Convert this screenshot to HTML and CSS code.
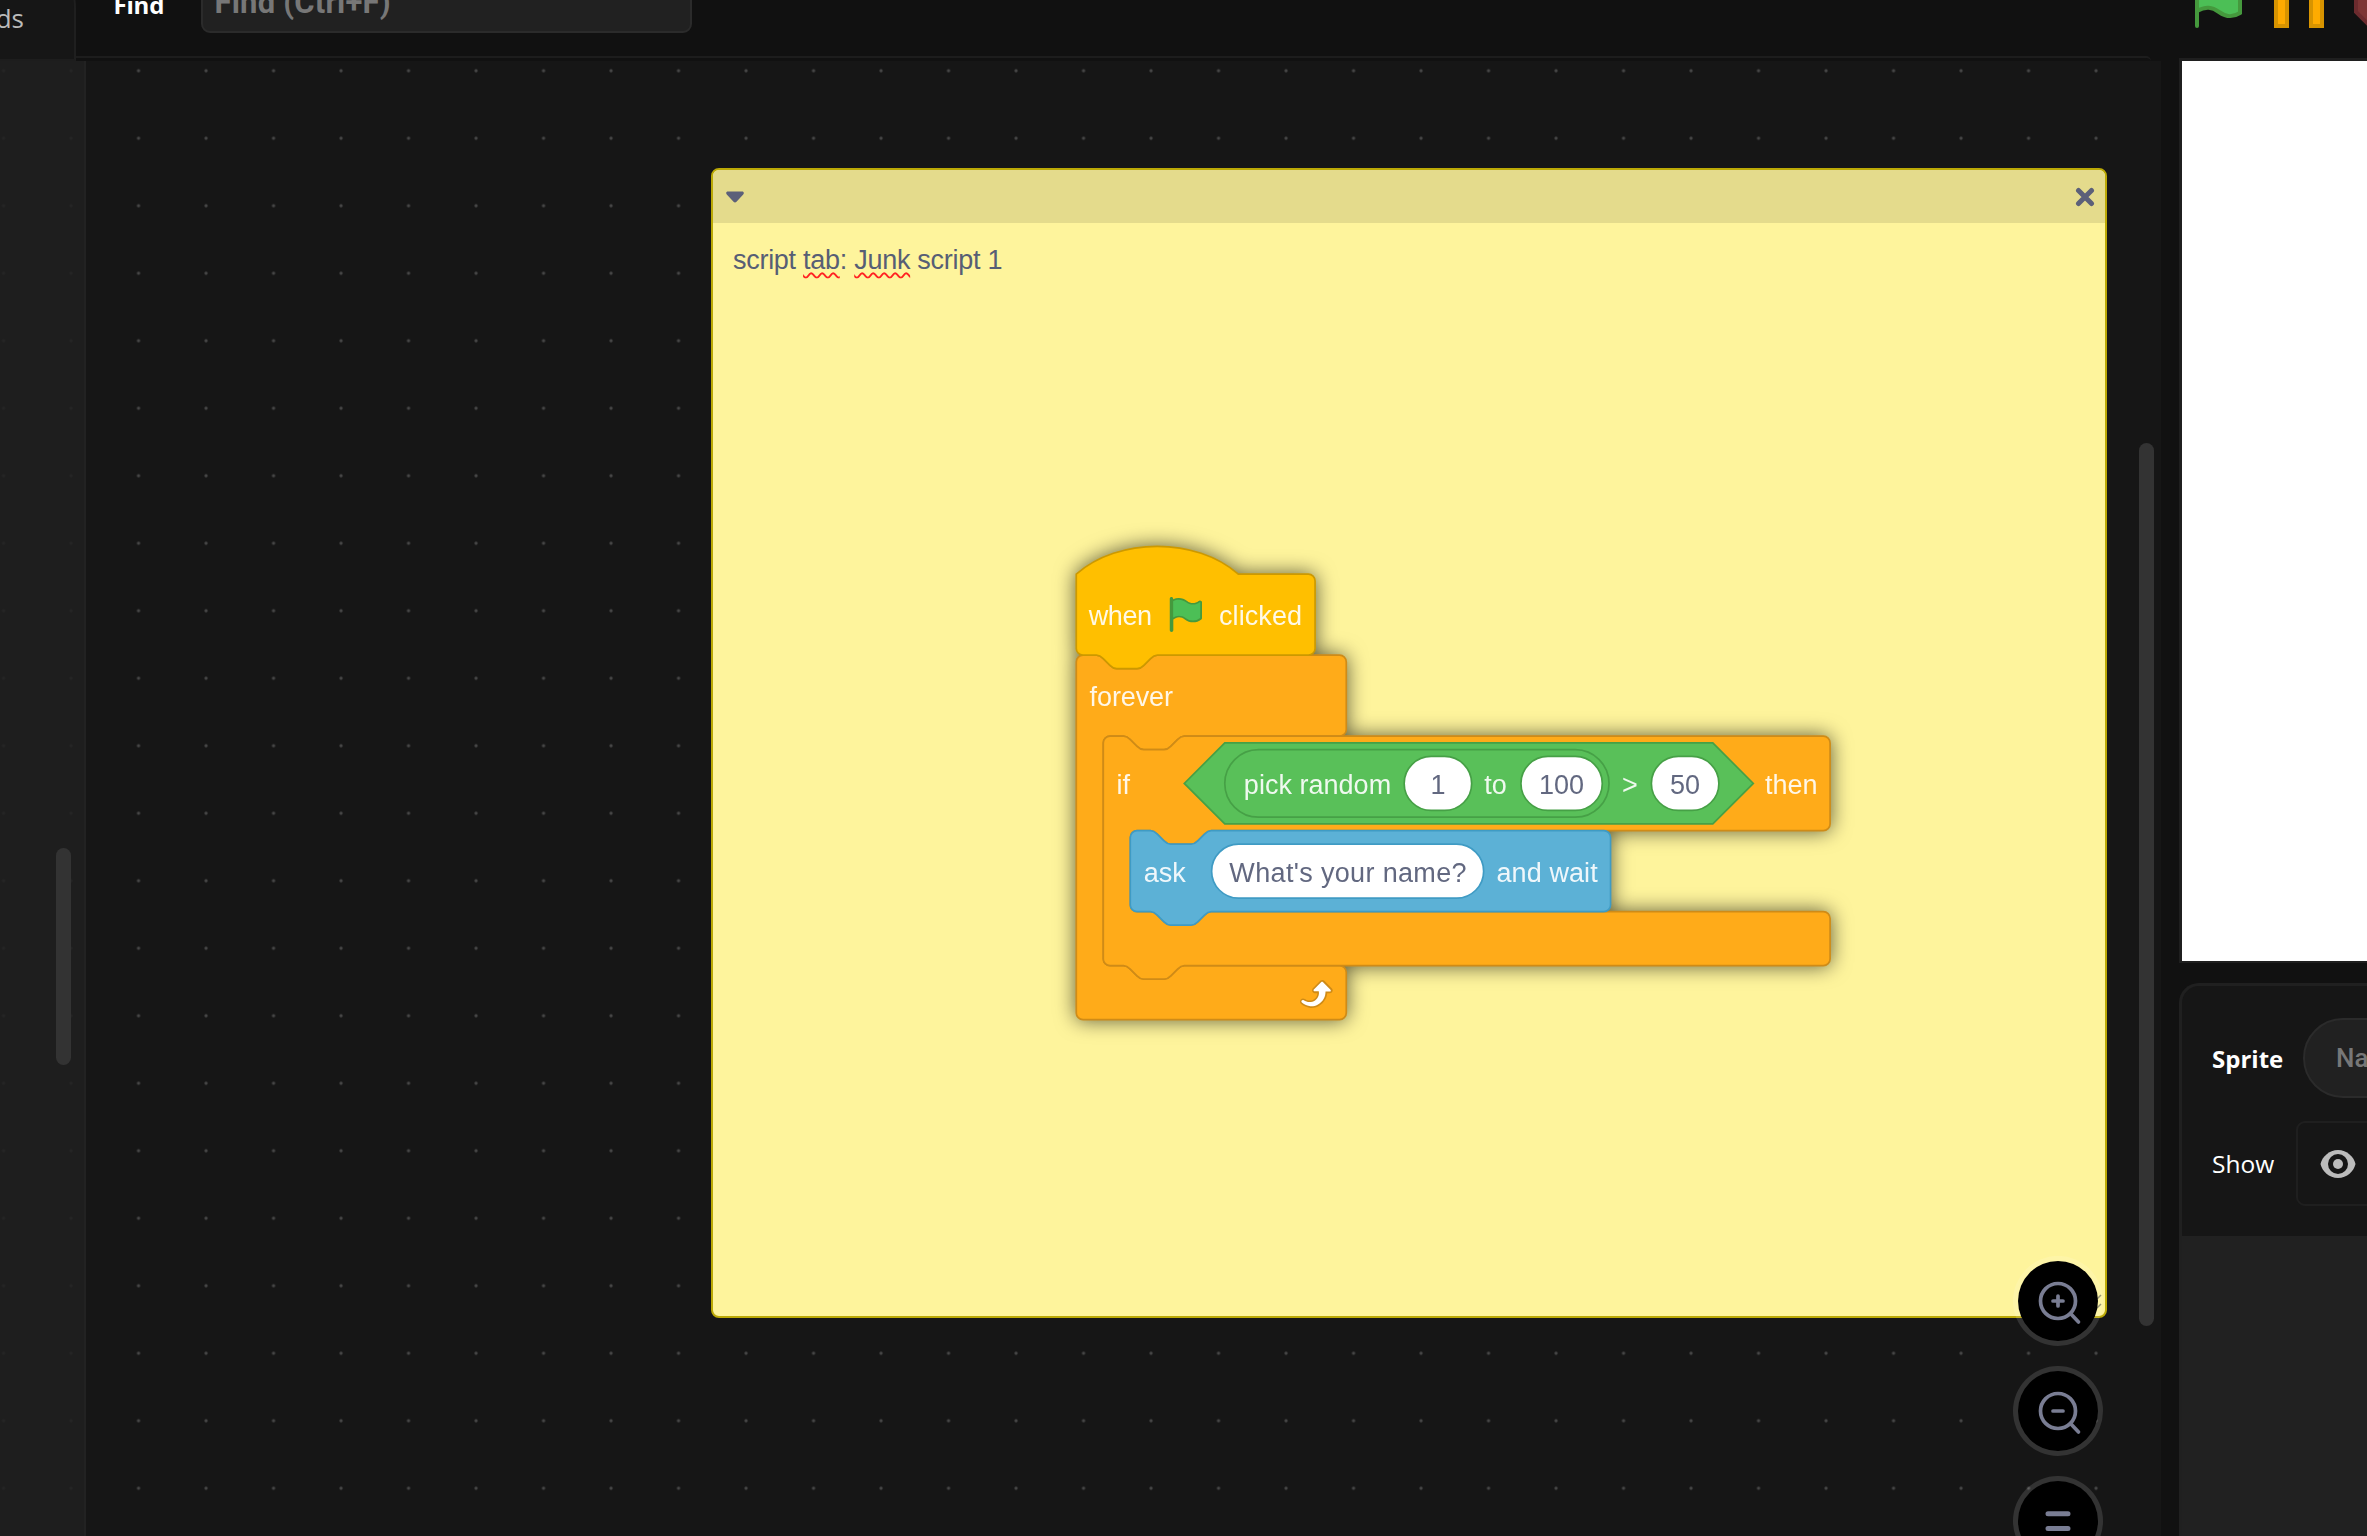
FILE: index.html
```html
<!DOCTYPE html>
<html lang="en">
<head>
<meta charset="utf-8">
<title>Script editor</title>
<link rel="stylesheet" href="styles.css">
</head>
<body>
<div class="app">
  <main class="editor">
    <header class="topbar">
      <div class="tab">Sounds</div>
      <label class="find-label" for="find">Find</label>
      <div class="find-box" id="find"><span>Find (Ctrl+F)</span></div>
    </header>
    <section class="workspace">
      <aside class="flyout"><div class="thumb flyout-thumb"></div></aside>
      <article class="comment">
        <div class="comment-bar">
          <svg width="18" height="12" viewBox="0 0 18 12"><path d="M2 .5h14c2 0 2.300 1.800 1.200 3L10.500 10.700c-1 1-2 1-3 0L.8 3.500C-.3 2.300 0 .5 2 .5z" fill="#5c6079"/></svg>
          <svg width="20" height="20" viewBox="0 0 20 20"><path d="M3.500 3.500l13 13M16.500 3.500l-13 13" stroke="#5c6079" stroke-width="5" stroke-linecap="round"/></svg>
        </div>
        <p class="comment-text">script <u>tab</u>: <u>Junk</u> script 1</p>
      </article>
      <svg class="grip" width="12" height="16" viewBox="0 0 12 16"><path d="M6 5L10 1M6 14l4-4" stroke="#8b8762" stroke-width="1.500"/></svg>

      <svg class="blocks" width="780" height="520" viewBox="0 0 462.222 308.148">
        <g class="stack" transform="translate(21.500 32.100)">
          <path class="control" d="M0 52a4 4 0 0 1 4-4h8c2 0 3 1 4 2l4 4c1 1 2 2 4 2h12c2 0 3-1 4-2l4-4c1-1 2-2 4-2H156a4 4 0 0 1 4 4v40a4 4 0 0 1-4 4H64c-2 0-3 1-4 2l-4 4c-1 1-2 2-4 2H40c-2 0-3-1-4-2l-4-4c-1-1-2-2-4-2h-8a4 4 0 0 0-4 4V228a4 4 0 0 0 4 4h8c2 0 3 1 4 2l4 4c1 1 2 2 4 2h12c2 0 3-1 4-2l4-4c1-1 2-2 4-2H156a4 4 0 0 1 4 4v24a4 4 0 0 1-4 4H4a4 4 0 0 1-4-4z"/>
          <path class="event" d="M0 0c25-22 71-22 96 0H137.500a4 4 0 0 1 4 4v40a4 4 0 0 1-4 4H48c-2 0-3 1-4 2l-4 4c-1 1-2 2-4 2H24c-2 0-3-1-4-2l-4-4c-1-1-2-2-4-2H4a4 4 0 0 1-4-4z"/>
          <path class="control" d="M16 100a4 4 0 0 1 4-4h8c2 0 3 1 4 2l4 4c1 1 2 2 4 2h12c2 0 3-1 4-2l4-4c1-1 2-2 4-2H442.700a4 4 0 0 1 4 4v48a4 4 0 0 1-4 4H80c-2 0-3 1-4 2l-4 4c-1 1-2 2-4 2H56c-2 0-3-1-4-2l-4-4c-1-1-2-2-4-2h-8a4 4 0 0 0-4 4v40a4 4 0 0 0 4 4h8c2 0 3 1 4 2l4 4c1 1 2 2 4 2h12c2 0 3-1 4-2l4-4c1-1 2-2 4-2H442.700a4 4 0 0 1 4 4v24a4 4 0 0 1-4 4H64c-2 0-3 1-4 2l-4 4c-1 1-2 2-4 2H40c-2 0-3-1-4-2l-4-4c-1-1-2-2-4-2h-8a4 4 0 0 1-4-4z"/>
          <path class="sensing" d="M32 156a4 4 0 0 1 4-4h8c2 0 3 1 4 2l4 4c1 1 2 2 4 2h12c2 0 3-1 4-2l4-4c1-1 2-2 4-2H312.600a4 4 0 0 1 4 4v40a4 4 0 0 1-4 4H80c-2 0-3 1-4 2l-4 4c-1 1-2 2-4 2H56c-2 0-3-1-4-2l-4-4c-1-1-2-2-4-2h-8a4 4 0 0 1-4-4z"/>
          <path class="operator" d="M88 100H377.200l24 24-24 24H88l-24-24z"/>
          <rect class="operator" x="88" y="104" width="227.700" height="40" rx="20"/>
          <rect class="field op-field" x="194.300" y="108" width="40" height="32" rx="16"/>
          <rect class="field op-field" x="263.500" y="108" width="48.200" height="32" rx="16"/>
          <rect class="field op-field" x="340.800" y="108" width="40" height="32" rx="16"/>
          <rect class="field sense-field" x="80.200" y="160" width="161.200" height="32" rx="16"/>
          <g transform="translate(52.900 12)">
            <path fill="#45993d" d="M20.800 3.700c-.4-.2-.9-.1-1.200.2-2 1.600-4.800 1.600-6.800 0-2.300-1.900-5.600-2.300-8.300-1v-.4c0-.6-.5-1-1-1s-1 .4-1 1v18.800c0 .5.5 1 1 1h.1c.5 0 1-.5 1-1v-6.400c1-.7 2.100-1.200 3.400-1.300 1.200 0 2.400.4 3.400 1.200 2.900 2.300 7 2.300 9.800 0 .3-.2.4-.5.4-.9V4.700c0-.5-.3-.9-.8-1z"/>
            <path fill="#4cbf56" d="M20.600 4.800l-.1 9.100v.1c-2.500 2-6.100 2-8.600 0-1.100-.9-2.500-1.400-4-1.400-1.200.1-2.300.5-3.400 1.100V4c2.500-1.400 5.500-1.100 7.700.6 2.400 1.900 5.700 1.900 8.100 0h.2c0 .1.100.1.100.2z"/>
          </g>
          <g transform="translate(128.500 236.300)">
            <path fill="#cf8b17" d="M23.300 11c-.3.6-.9 1-1.500 1h-1.600c-.1 1.300-.5 2.500-1.100 3.600-.9 1.700-2.300 3.200-4.100 4.100-1.700.9-3.600 1.200-5.500.9-1.800-.3-3.500-1.100-4.900-2.300-.7-.7-.7-1.900 0-2.600.6-.6 1.600-.7 2.300-.2H7c.9.6 1.900.9 2.900.9s1.900-.3 2.700-.9c1.100-.8 1.800-2.100 1.800-3.500h-1.500c-.9 0-1.700-.7-1.700-1.700 0-.4.200-.9.500-1.200l4.400-4.400c.7-.6 1.700-.6 2.400 0L23 9.200c.5.5.6 1.200.3 1.800z"/>
            <path fill="#fff" d="M21.800 11h-2.600c0 1.500-.3 2.900-1 4.200-.8 1.600-2.100 2.800-3.700 3.600-1.500.8-3.300 1.100-4.900.8-1.600-.2-3.200-1-4.400-2.100-.4-.3-.4-.9-.1-1.200.3-.4.9-.4 1.200-.1 1 .7 2.200 1.100 3.400 1.100s2.300-.3 3.300-1c.9-.6 1.600-1.500 2-2.600.3-.9.4-1.800.2-2.800h-2.400c-.4 0-.7-.3-.7-.7 0-.2.1-.3.2-.4l4.400-4.400c.3-.3.7-.3.9 0L22 9.800c.3.3.4.6.3.9s-.3.300-.5.3z"/>
          </g>
          <g class="labels">
            <text x="7.400" y="30" textLength="37.500">when</text>
            <text x="84.600" y="30" textLength="49.200">clicked</text>
            <text x="7.900" y="78.200" textLength="49.400">forever</text>
            <text x="23.800" y="130">if</text>
            <text x="99.300" y="130" textLength="87.300">pick random</text>
            <text x="241.800" y="130">to</text>
            <text x="323.400" y="130">&gt;</text>
            <text x="408.100" y="130" textLength="31.200">then</text>
            <text x="40" y="182.300">ask</text>
            <text x="249" y="182.300" textLength="60">and wait</text>
          </g>
          <g class="values">
            <text x="214.300" y="130">1</text>
            <text x="287.600" y="130">100</text>
            <text x="360.800" y="130">50</text>
            <text x="161" y="182.300" textLength="140.600">What's your name?</text>
          </g>
        </g>
      </svg>

      <nav class="zoom-controls">
        <span class="zoom"><svg viewBox="-40 -40 80 80"><circle r="17.500"/><path d="M12.500 12.500l8 8.500M-5 0H5M0-5V5"/></svg></span>
        <span class="zoom"><svg viewBox="-40 -40 80 80"><circle r="17.500"/><path d="M12.500 12.500l8 8.500M-5 0H5"/></svg></span>
        <span class="zoom"><svg class="wide" viewBox="-40 -40 80 80"><path d="M-10-7.300H10M-10 7.500H10"/></svg></span>
      </nav>
      <div class="thumb main-thumb"></div>
    </section>
  </main>

  <aside class="stage-column">
    <div class="stage-controls">
      <svg width="188" height="60" viewBox="0 0 188 60">
        <path d="M18 12c12-8 20-4 25 0s12 4 18-1v34c-8 5-14 4-21-1s-13-6-22-1z" fill="#4cbf56" stroke="#45993d" stroke-width="4"/>
        <path d="M18 5V58" stroke="#45993d" stroke-width="4" stroke-linecap="round"/>
        <path d="M97 2h11v56H97zM132 2h11v56h-11z" fill="#ffab00" stroke="#d89400" stroke-width="4"/>
        <path d="M177 17l15-13h24v56h-23L177 44z" fill="#7d3535" stroke="#6c2b2e" stroke-width="4"/>
      </svg>
    </div>
    <div class="stage"></div>
    <section class="sprite-panel">
      <div class="sprite-info">
        <div class="row name-row"><b>Sprite</b><div class="name-box">Name</div></div>
        <div class="row show-row"><span>Show</span><div class="show-box">
          <svg width="36" height="30" viewBox="0 0 36 30"><path d="M18 1C9 1 2 8 .5 15 2 22 9 29 18 29s16-7 17.500-14C34 8 27 1 18 1z" fill="#bcbcbc"/><circle cx="18" cy="15" r="10" fill="#161616"/><circle cx="18" cy="15" r="5" fill="#bcbcbc"/></svg>
        </div></div>
      </div>
    </section>
  </aside>
</div>
</body>
</html>
```
FILE: styles.css
```css
* { box-sizing: border-box; }
body {
  margin: 0;
  width: 2367px;
  height: 1536px;
  overflow: hidden;
  background: #111;
  color: #fff;
  font-family: "Open Sans", sans-serif;
}
.app {
  display: grid;
  grid-template-columns: 2161px 206px;
  height: 1588px;
  margin-top: -52px;
}
.editor { display: flex; flex-direction: column; }

/* Top bar */
.topbar {
  display: flex;
  align-items: center;
  height: 113px;
  flex: none;
  padding-bottom: 3px;
  position: relative;
}
.topbar::after {
  content: "";
  position: absolute;
  left: 76px;
  right: 10px;
  bottom: 0;
  height: 3px;
  border-top: 2px solid #1d1d1d;
  border-radius: 0 12px 0 0;
}
.tab {
  width: 76px;
  height: 113px;
  margin-bottom: -3px;
  padding: 57px 50px 0 0;
  display: flex;
  justify-content: flex-end;
  background: #161616;
  border-right: 2px solid #1f1f1f;
  border-bottom: 2px solid #1d1d1d;
  border-radius: 0 60px 0 0;
  color: #bbb;
  font-size: 26px;
  line-height: 26px;
}
.find-label {
  width: 124.500px;
  padding-left: 37.500px;
  font-size: 24px;
  font-weight: 700;
  line-height: 32px;
  padding-top: 3px;
  letter-spacing: -.2px;
}
.find-box {
  width: 491px;
  height: 60px;
  display: flex;
  align-items: center;
  padding-left: 12px;
  border: 2px solid #2b2b2b;
  border-radius: 9px;
  background: #212121;
  color: #777;
  font: 700 31px/32px Roboto, sans-serif;
  letter-spacing: .2px;
}

/* Canvas */
.workspace {
  position: relative;
  flex: 1;
  background-color: #161616;
  background-image: radial-gradient(circle at 50% 50%, #4c4c4c 0, #444 1px, transparent 2.200px);
  background-size: 67.500px 67.500px;
  background-position: 37.300px -24px;
}
.flyout {
  display: flex;
  justify-content: flex-end;
  width: 86px;
  height: 100%;
  background: rgba(32, 32, 32, .85);
  border-right: 2px solid #222;
}
.thumb { width: 15px; border-radius: 8px; background: #333; }
.flyout-thumb { height: 217px; margin: 787px 13px 0 0; }
.main-thumb { position: absolute; left: 2139px; top: 382px; height: 883px; }

.comment {
  position: absolute;
  left: 710.500px;
  top: 106.500px;
  width: 1396px;
  height: 1150.500px;
  border: 2px solid #bba906;
  border-radius: 8px;
  background: #fef49c;
  overflow: hidden;
}
.comment-bar {
  display: flex;
  justify-content: space-between;
  align-items: center;
  height: 53px;
  padding: 2px 9.500px 0 13px;
  background: #e4db8c;
}
.comment-text {
  margin: 19px 0 0 20.500px;
  color: #575e75;
  font: 27px/36px "Liberation Sans", Arial, sans-serif;
  letter-spacing: -.28px;
}
.comment-text u { text-decoration: underline wavy #f22 1.500px; text-underline-offset: 3px; text-decoration-skip-ink: none; }
.grip { position: absolute; left: 2091px; top: 1233px; }

.blocks { position: absolute; left: 1040px; top: 458.600px; overflow: visible; }
.stack { filter: drop-shadow(0 0 6px rgba(0, 0, 0, .62)); }
.control { fill: #ffab19; stroke: #cf8b17; }
.event { fill: #ffbf00; stroke: #cc9900; }
.sensing { fill: #5cb1d6; stroke: #3f9bc4; }
.operator { fill: #59c059; stroke: #46a046; }
.field { fill: #fff; }
.op-field { stroke: #46a046; }
.sense-field { stroke: #3f9bc4; }
.labels, .values { font: 16px "Liberation Sans", Arial, sans-serif; fill: #fff; }
.labels { fill-opacity: .9; }
.values { fill: #626880; text-anchor: middle; }

.zoom-controls {
  position: absolute;
  left: 2013px;
  top: 1194.500px;
  display: flex;
  flex-direction: column;
  gap: 20px;
}
.zoom {
  width: 90px;
  height: 90px;
  border: 5px solid rgba(255, 255, 255, .125);
  border-radius: 50%;
  background: #000;
  background-clip: padding-box;
}
.zoom svg { display: block; width: 80px; height: 80px; fill: none; stroke: #797d93; stroke-width: 3.700px; stroke-linecap: round; }
.zoom .wide { stroke-width: 5px; }

/* Stage side */
.stage-column { display: flex; flex-direction: column; padding-left: 18px; }
.stage-controls { height: 110px; padding-top: 20px; overflow: hidden; }
.stage-controls svg { display: block; }
.stage {
  height: 905px;
  border: solid #1f1f1f;
  border-width: 3px 0 2px 3px;
  background: #fff;
}
.sprite-panel {
  flex: 1;
  margin-top: 20px;
  border: solid #202020;
  border-width: 3px 0 0 3px;
  border-radius: 20px 0 0 0;
  background: #212121;
  overflow: hidden;
}
.sprite-info {
  height: 250px;
  padding: 32px 0 0 30px;
  background: #161616;
  font-size: 24.500px;
}
.row { display: flex; align-items: center; width: 400px; }
.row > :first-child { flex: none; }
.name-row > b { width: 91px; font-size: 24px; }
.name-box {
  width: 260px;
  height: 80px;
  display: flex;
  align-items: center;
  padding-left: 31px;
  border: 2px solid #2b2b2b;
  border-radius: 40px;
  background: #212121;
  color: #777;
  font: 500 26px/32px Roboto, sans-serif;
}
.show-row { margin-top: 23px; }
.show-row > span { width: 84px; }
.show-box {
  width: 92px;
  height: 85px;
  display: flex;
  align-items: center;
  padding-left: 22px;
  border: 2px solid #1f1f1f;
  border-radius: 9px;
}
```
